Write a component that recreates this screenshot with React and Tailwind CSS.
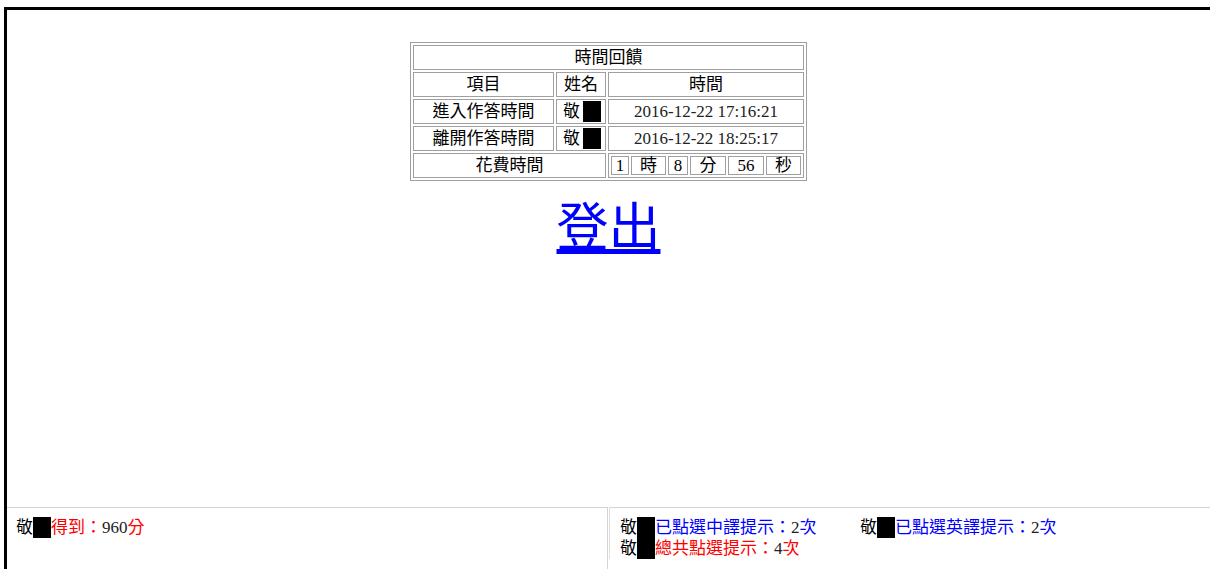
import React from "react";

const cell = "border border-[#a0a0a0] p-0 text-center align-middle leading-[23px] whitespace-nowrap";
const small = "border border-[#a0a0a0] p-0 text-center align-middle h-[19px] leading-[17px] whitespace-nowrap";

function Redact({ className = "" }) {
  return <span className={"inline-block w-[18px] h-[21px] bg-black align-[-5px] " + className} />;
}

export default function App() {
  return (
    <div
      className="w-[1219px] h-[569px] bg-white overflow-hidden pl-[4px] pt-[7px] text-[17px] text-black"
      style={{ fontFamily: '"Liberation Serif", "Noto Sans CJK TC", serif' }}
    >
      <div className="w-[1206px] h-[562px] border-l-[3px] border-t-[3px] border-black flex flex-col">
        {/* top frame */}
        <div className="h-[497px] flex flex-col items-center">
          <table className="mt-[32px] border border-[#a0a0a0] border-separate border-spacing-[2px]">
            <tbody>
              <tr>
                <td colSpan={3} className={cell}>時間回饋</td>
              </tr>
              <tr>
                <td className={cell + " w-[141px]"}>項目</td>
                <td className={cell + " w-[50px]"}>姓名</td>
                <td className={cell + " w-[196px]"}>時間</td>
              </tr>
              <tr>
                <td className={cell}>進入作答時間</td>
                <td className={cell + " text-left pl-[6px]"}>敬<Redact className="ml-[3px]" /></td>
                <td className={cell + " text-[#222]"}>2016-12-22 17:16:21</td>
              </tr>
              <tr>
                <td className={cell}>離開作答時間</td>
                <td className={cell + " text-left pl-[6px]"}>敬<Redact className="ml-[3px]" /></td>
                <td className={cell + " text-[#222]"}>2016-12-22 18:25:17</td>
              </tr>
              <tr>
                <td colSpan={2} className={cell}>花費時間</td>
                <td className="border border-[#a0a0a0] p-0 align-middle leading-[0]">
                  <table className="w-full border-separate border-spacing-[2px] text-[17px]">
                    <tbody>
                      <tr>
                        <td className={small + " w-[18px]"}>1</td>
                        <td className={small + " w-[35px]"}>時</td>
                        <td className={small + " w-[20px]"}>8</td>
                        <td className={small + " w-[36px]"}>分</td>
                        <td className={small + " w-[36px]"}>56</td>
                        <td className={small}>秒</td>
                      </tr>
                    </tbody>
                  </table>
                </td>
              </tr>
            </tbody>
          </table>

          <a
            href="#"
            className="mt-[18px] text-[52px] leading-[60px] text-[#0000ff] underline decoration-[5px] underline-offset-[3px]"
          >
            登出
          </a>
        </div>

        {/* bottom frames */}
        <div className="flex-1 flex">
          <div className="w-[600px] border-t border-[#d4d4d4] pl-[9px] pt-[9px] leading-[20px]">
            敬<Redact />
            <span className="text-[#ff0000]">得到：</span>
            <span className="text-[#222]">960</span>
            <span className="text-[#ff0000]">分</span>
          </div>
          <div className="w-[2px] border-l border-[#d4d4d4]" />
          <div className="flex-1 flex flex-col">
            <div className="w-[601px] border-t border-[#d4d4d4] border-l border-l-[#e0e0e0] pl-[10px] pt-[9px] leading-[20px]">
              <div className="flex">
                <span className="w-[240px]">
                  敬<Redact />
                  <span className="text-[#0000ff]">已點選中譯提示：</span>
                  <span className="text-[#222]">2</span>
                  <span className="text-[#0000ff]">次</span>
                </span>
                <span>
                  敬<Redact />
                  <span className="text-[#0000ff]">已點選英譯提示：</span>
                  <span className="text-[#222]">2</span>
                  <span className="text-[#0000ff]">次</span>
                </span>
              </div>
              <div>
                敬<Redact />
                <span className="text-[#ff0000]">總共點選提示：</span>
                <span className="text-[#222]">4</span>
                <span className="text-[#ff0000]">次</span>
              </div>
            </div>
          </div>
        </div>
      </div>
    </div>
  );
}
